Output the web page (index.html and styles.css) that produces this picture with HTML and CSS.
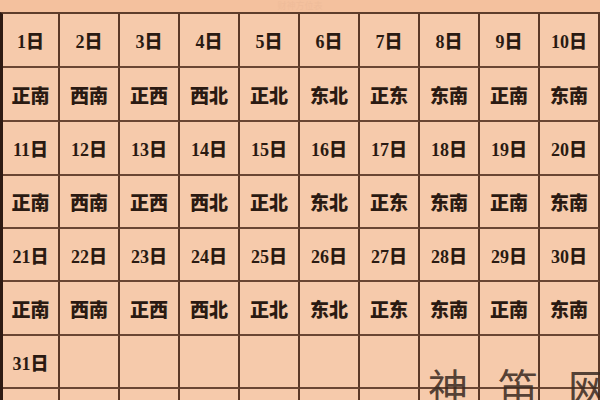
FILE: index.html
```html
<!DOCTYPE html>
<html lang="zh">
<head>
<meta charset="utf-8">
<link rel="stylesheet" href="styles.css">
</head>
<body>
<div class="page">
  <div class="title">财神方位表</div>
  <div class="grid">
    <div class="c d">1日</div><div class="c d">2日</div><div class="c d">3日</div><div class="c d">4日</div><div class="c d">5日</div><div class="c d">6日</div><div class="c d">7日</div><div class="c d">8日</div><div class="c d">9日</div><div class="c d">10日</div>
    <div class="c">正南</div><div class="c">西南</div><div class="c">正西</div><div class="c">西北</div><div class="c">正北</div><div class="c">东北</div><div class="c">正东</div><div class="c">东南</div><div class="c">正南</div><div class="c">东南</div>
    <div class="c d">11日</div><div class="c d">12日</div><div class="c d">13日</div><div class="c d">14日</div><div class="c d">15日</div><div class="c d">16日</div><div class="c d">17日</div><div class="c d">18日</div><div class="c d">19日</div><div class="c d">20日</div>
    <div class="c">正南</div><div class="c">西南</div><div class="c">正西</div><div class="c">西北</div><div class="c">正北</div><div class="c">东北</div><div class="c">正东</div><div class="c">东南</div><div class="c">正南</div><div class="c">东南</div>
    <div class="c d">21日</div><div class="c d">22日</div><div class="c d">23日</div><div class="c d">24日</div><div class="c d">25日</div><div class="c d">26日</div><div class="c d">27日</div><div class="c d">28日</div><div class="c d">29日</div><div class="c d">30日</div>
    <div class="c">正南</div><div class="c">西南</div><div class="c">正西</div><div class="c">西北</div><div class="c">正北</div><div class="c">东北</div><div class="c">正东</div><div class="c">东南</div><div class="c">正南</div><div class="c">东南</div>
    <div class="c d">31日</div><div class="c"></div><div class="c"></div><div class="c"></div><div class="c"></div><div class="c"></div><div class="c"></div><div class="c"></div><div class="c"></div><div class="c"></div>
    <div class="c"></div><div class="c"></div><div class="c"></div><div class="c"></div><div class="c"></div><div class="c"></div><div class="c"></div><div class="c"></div><div class="c"></div><div class="c"></div>
  </div>
  <div class="mark">神笛网</div>
</div>
</body>
</html>
```

FILE: styles.css
```css
html, body {
  margin: 0;
  padding: 0;
  background: #f5c8a8;
}
.page {
  position: relative;
  width: 600px;
  height: 400px;
  overflow: hidden;
  background: #f6caab;
}
.title {
  height: 12px;
  line-height: 12px;
  overflow: hidden;
  background: #f4c19e;
  color: #efbc9a;
  font-family: "Noto Sans CJK SC", sans-serif;
  font-size: 9px;
  text-align: center;
}
.grid {
  display: grid;
  grid-template-columns: 57px repeat(9, 60px);
  grid-template-rows: 54px 54px 54px 53px 53px 54px 53px 40px;
  border-top: 2px solid #5e3d2b;
  border-left: 3px solid #2e1a12;
}
.c {
  box-sizing: border-box;
  border-right: 2px solid #5a3827;
  border-bottom: 2px solid #6a4633;
  display: flex;
  align-items: center;
  justify-content: center;
  font-family: "Liberation Serif", "Noto Sans CJK SC", serif;
  font-weight: 900;
  font-size: 19px;
  color: #2a1a12;
}
.d {
  font-size: 18px;
}
.mark {
  position: absolute;
  left: 428px;
  top: 362px;
  font-family: "Noto Sans CJK SC", serif;
  font-size: 40px;
  line-height: 48px;
  font-weight: 400;
  letter-spacing: 30px;
  white-space: nowrap;
  color: #3a2a22;
  opacity: 0.85;
}
```
